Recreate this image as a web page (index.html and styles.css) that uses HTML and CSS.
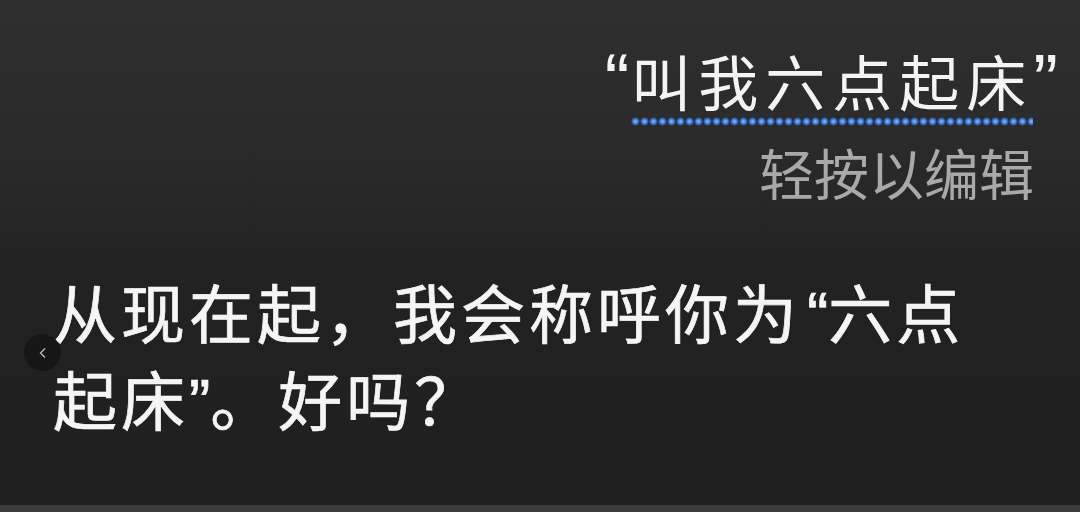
FILE: index.html
```html
<!DOCTYPE html>
<html lang="zh-CN">
<head>
<meta charset="utf-8">
<link rel="stylesheet" href="styles.css">
</head>
<body>
<div class="screen">
  <div class="siri-request">
    <div class="utterance"><span class="q">“</span><span class="spoken">叫我六点起床</span><span class="q">”</span></div>
    <div class="hint">轻按以编辑</div>
  </div>
  <div class="reply">从现在起，我会称呼你为<span class="q open">“</span>六点<br>起床<span class="q">”</span>。好吗？</div>
  <div class="back-btn"><svg width="10" height="12" viewBox="0 0 10 12"><path d="M7 1.5 L2.5 6 L7 10.5" fill="none" stroke="#bdbdbd" stroke-width="1.3"/></svg></div>
</div>
<div class="bottom-strip"></div>
</body>
</html>
```
FILE: styles.css
```css
html, body {
  margin: 0;
  padding: 0;
  width: 1080px;
  height: 512px;
  overflow: hidden;
  background: #222;
}
.screen {
  position: relative;
  height: 505px;
  box-sizing: border-box;
  background: linear-gradient(180deg, #2f2f2f 0%, #2a2a2a 30%, #222 55%, #1f1f1f 100%);
  font-family: "Noto Sans CJK SC", "Noto Sans", sans-serif;
  color: #f2f2f2;
  padding: 42px 22px 0 53px;
  display: flex;
  flex-direction: column;
}
.siri-request {
  display: flex;
  flex-direction: column;
  align-items: flex-end;
}
.utterance {
  font-size: 60px;
  line-height: 76px;
  letter-spacing: 7px;
  color: #f4f4f4;
  white-space: nowrap;
}
.utterance .q {
  font-family: "Liberation Sans", sans-serif;
  font-size: 74px;
  line-height: 0;
  letter-spacing: 0;
}
.spoken {
  padding-bottom: 3px;
  margin-left: 2px;
  background-image: radial-gradient(circle at center, #8cbcf0 0, #3f7fd6 2.4px, rgba(45,100,195,0.75) 3.6px, transparent 4.4px);
  background-size: 9px 9px;
  background-repeat: repeat-x;
  background-position: 0 100%;
}
.hint {
  margin-top: 22px;
  margin-right: 24px;
  font-size: 55px;
  line-height: 62px;
  letter-spacing: 0;
  color: #a9a9a9;
}
.reply {
  margin-top: 68px;
  font-size: 64px;
  line-height: 81px;
  letter-spacing: 4px;
  color: #f5f5f5;
  -webkit-text-stroke: 0.7px #f5f5f5;
}
.reply .q {
  font-family: "Liberation Sans", sans-serif;
  letter-spacing: 0;
}
.reply .q.open {
  padding-left: 6px;
}
.back-btn {
  position: absolute;
  left: 24px;
  top: 334px;
  width: 37px;
  height: 37px;
  border-radius: 50%;
  background: #161616;
  display: flex;
  align-items: center;
  justify-content: center;
}
.bottom-strip {
  height: 7px;
  background: #3b3b3b;
}
```
